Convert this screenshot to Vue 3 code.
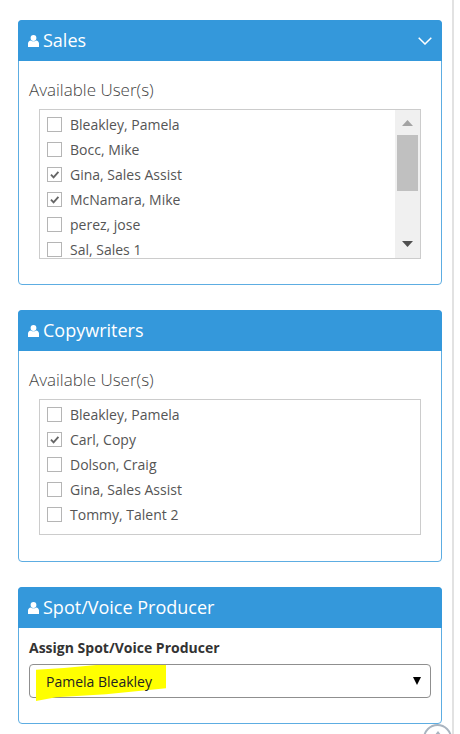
<script setup>
const sales = [
  { name: 'Bleakley, Pamela', on: false },
  { name: 'Bocc, Mike', on: false },
  { name: 'Gina, Sales Assist', on: true },
  { name: 'McNamara, Mike', on: true },
  { name: 'perez, jose', on: false },
  { name: 'Sal, Sales 1', on: false }
]
const copy = [
  { name: 'Bleakley, Pamela', on: false },
  { name: 'Carl, Copy', on: true },
  { name: 'Dolson, Craig', on: false },
  { name: 'Gina, Sales Assist', on: false },
  { name: 'Tommy, Talent 2', on: false }
]
</script>

<template>
  <div class="page">
    <section class="panel sales">
      <header class="head">
        <svg class="user" viewBox="0 0 11 12"><circle cx="5.5" cy="3" r="2.9" fill="#fff"/><path d="M0 12V8.6C0 6.8 1.3 5.6 2.8 5.4 3.6 6 4.5 6.3 5.5 6.3S7.400 6 8.200 5.400C9.700 5.600 11 6.800 11 8.600V12Z" fill="#fff"/></svg>
        <h2>Sales</h2>
        <svg class="chev" viewBox="0 0 14 8"><path d="M.7.7 7 7 13.300.7" fill="none" stroke="#fff" stroke-width="1.500"/></svg>
      </header>
      <div class="body">
        <p class="avail">Available User(s)</p>
        <div class="list scroll">
          <div class="rows">
            <label v-for="u in sales" :key="u.name" class="row">
              <span class="box">
                <svg v-if="u.on" viewBox="0 0 14 14"><path d="M3.200 7.200 6 10.200 11.200 4.200" fill="none" stroke="#666" stroke-width="2"/></svg>
              </span>
              <span>{{ u.name }}</span>
            </label>
          </div>
          <div class="bar">
            <svg class="arrow" viewBox="0 0 11 6"><path d="M5.500 0 11 6H0Z" fill="#a3a3a3"/></svg>
            <div class="thumb"></div>
            <svg class="arrow down" viewBox="0 0 11 6"><path d="M0 0H11L5.500 6Z" fill="#505050"/></svg>
          </div>
        </div>
      </div>
    </section>

    <section class="panel copy">
      <header class="head">
        <svg class="user" viewBox="0 0 11 12"><circle cx="5.5" cy="3" r="2.9" fill="#fff"/><path d="M0 12V8.6C0 6.8 1.3 5.6 2.8 5.4 3.6 6 4.5 6.3 5.5 6.3S7.400 6 8.200 5.400C9.700 5.600 11 6.800 11 8.600V12Z" fill="#fff"/></svg>
        <h2>Copywriters</h2>
      </header>
      <div class="body">
        <p class="avail">Available User(s)</p>
        <div class="list tall">
          <div class="rows">
            <label v-for="u in copy" :key="u.name" class="row">
              <span class="box">
                <svg v-if="u.on" viewBox="0 0 14 14"><path d="M3.200 7.200 6 10.200 11.200 4.200" fill="none" stroke="#666" stroke-width="2"/></svg>
              </span>
              <span>{{ u.name }}</span>
            </label>
          </div>
        </div>
      </div>
    </section>

    <section class="panel producer">
      <header class="head">
        <svg class="user" viewBox="0 0 11 12"><circle cx="5.5" cy="3" r="2.9" fill="#fff"/><path d="M0 12V8.6C0 6.8 1.3 5.6 2.8 5.4 3.6 6 4.500 6.300 5.500 6.300S7.400 6 8.200 5.400C9.700 5.600 11 6.800 11 8.600V12Z" fill="#fff"/></svg>
        <h2>Spot/Voice Producer</h2>
      </header>
      <div class="body pbody">
        <p class="assign">Assign Spot/Voice Producer</p>
        <div class="select">
          <svg class="mark" viewBox="0 0 130 38" preserveAspectRatio="none"><path d="M0 5 28 3 60 0 130 0V24L70 30 20 33 0 37Z" fill="#ffff00"/></svg>
          <span class="value">Pamela Bleakley</span>
          <svg class="caret" viewBox="0 0 8 8"><path d="M0 0H8L4 8Z" fill="#000"/></svg>
        </div>
      </div>
      <div class="top-btn">
        <svg viewBox="0 0 8 5"><path d="M4 0 8 5H0Z" fill="#a9b4c0"/></svg>
      </div>
    </section>
  </div>
</template>

<style>
html, body { margin: 0; background: #fff; }
</style>

<style scoped>
.page {
  box-sizing: border-box;
  width: 454px;
  height: 734px;
  overflow: hidden;
  padding: 20px 10px 0 18px;
  border-right: 2px solid #e2e2e2;
  font-family: "Open Sans", "Noto Sans", sans-serif;
  color: #555;
  display: flex;
  flex-direction: column;
  gap: 25px;
}
.panel {
  position: relative;
  box-sizing: border-box;
  width: 424px;
  flex: none;
  border: 1px solid #5dade2;
  border-radius: 4px;
  background: #fff;
}
.sales { height: 265px; }
.copy { height: 252px; }
.producer { height: 137px; }
.head {
  height: 41px;
  margin: -1px -1px 0;
  box-sizing: border-box;
  padding: 0 10px;
  background: #3498db;
  border-radius: 4px 4px 0 0;
  display: flex;
  align-items: center;
  color: #fff;
}
.head h2 {
  margin: -2px 0 0;
  font-size: 18px;
  font-weight: 400;
  line-height: 24px;
}
.user { width: 11px; height: 12px; margin: 1px 4px 0 0; flex: none; }
.chev { width: 14px; height: 8px; margin-left: auto; flex: none; }
.body { padding: 17px 20px 0 10px; }
.avail {
  margin: 0 0 7px;
  font-size: 17px;
  font-weight: 300;
  line-height: 24px;
  color: #444;
}
.list {
  box-sizing: border-box;
  width: 382px;
  margin-left: 10px;
  border: 1px solid #ccc;
  overflow: hidden;
  display: flex;
}
.scroll { height: 150px; }
.tall { height: 136px; }
.rows {
  flex: 1;
  padding: 2px 0 0 7px;
}
.row {
  display: flex;
  align-items: center;
  gap: 8px;
  height: 25px;
  font-size: 14px;
  color: #555;
}
.box {
  box-sizing: border-box;
  width: 15px;
  height: 15px;
  border: 1px solid #b5b5b5;
  background: #fff;
  flex: none;
}
.box svg { display: block; width: 13px; height: 13px; }
.bar {
  width: 25px;
  background: #f0f0f0;
  flex: none;
  display: flex;
  flex-direction: column;
  align-items: center;
  padding-top: 10px;
  box-sizing: border-box;
}
.arrow { width: 11px; height: 6px; flex: none; }
.thumb {
  width: 21px;
  height: 56px;
  background: #c0c0c0;
  margin-top: 9px;
  flex: none;
}
.arrow.down { margin-top: 50px; }
.pbody { padding: 10px 10px 0; }
.assign {
  margin: 0 0 6px;
  font-size: 14px;
  font-weight: 700;
  line-height: 20px;
  color: #333;
}
.select {
  position: relative;
  box-sizing: border-box;
  height: 34px;
  width: 402px;
  border: 1px solid #8f8f8f;
  border-radius: 4px;
  display: flex;
  align-items: center;
  padding: 0 9px 0 16px;
  font-size: 14px;
  color: #222;
}
.mark {
  position: absolute;
  left: 6px;
  top: 0;
  width: 130px;
  height: 37px;
}
.value { position: relative; }
.caret { width: 8px; height: 8px; margin-left: auto; flex: none; }
.top-btn {
  position: absolute;
  left: 404px;
  top: 136px;
  width: 29px;
  height: 29px;
  box-sizing: border-box;
  border: 2px solid #a9b4c0;
  border-radius: 50%;
  background: #fff;
  display: flex;
  justify-content: center;
  padding-top: 5px;
}
.top-btn svg { width: 8px; height: 5px; }
</style>
